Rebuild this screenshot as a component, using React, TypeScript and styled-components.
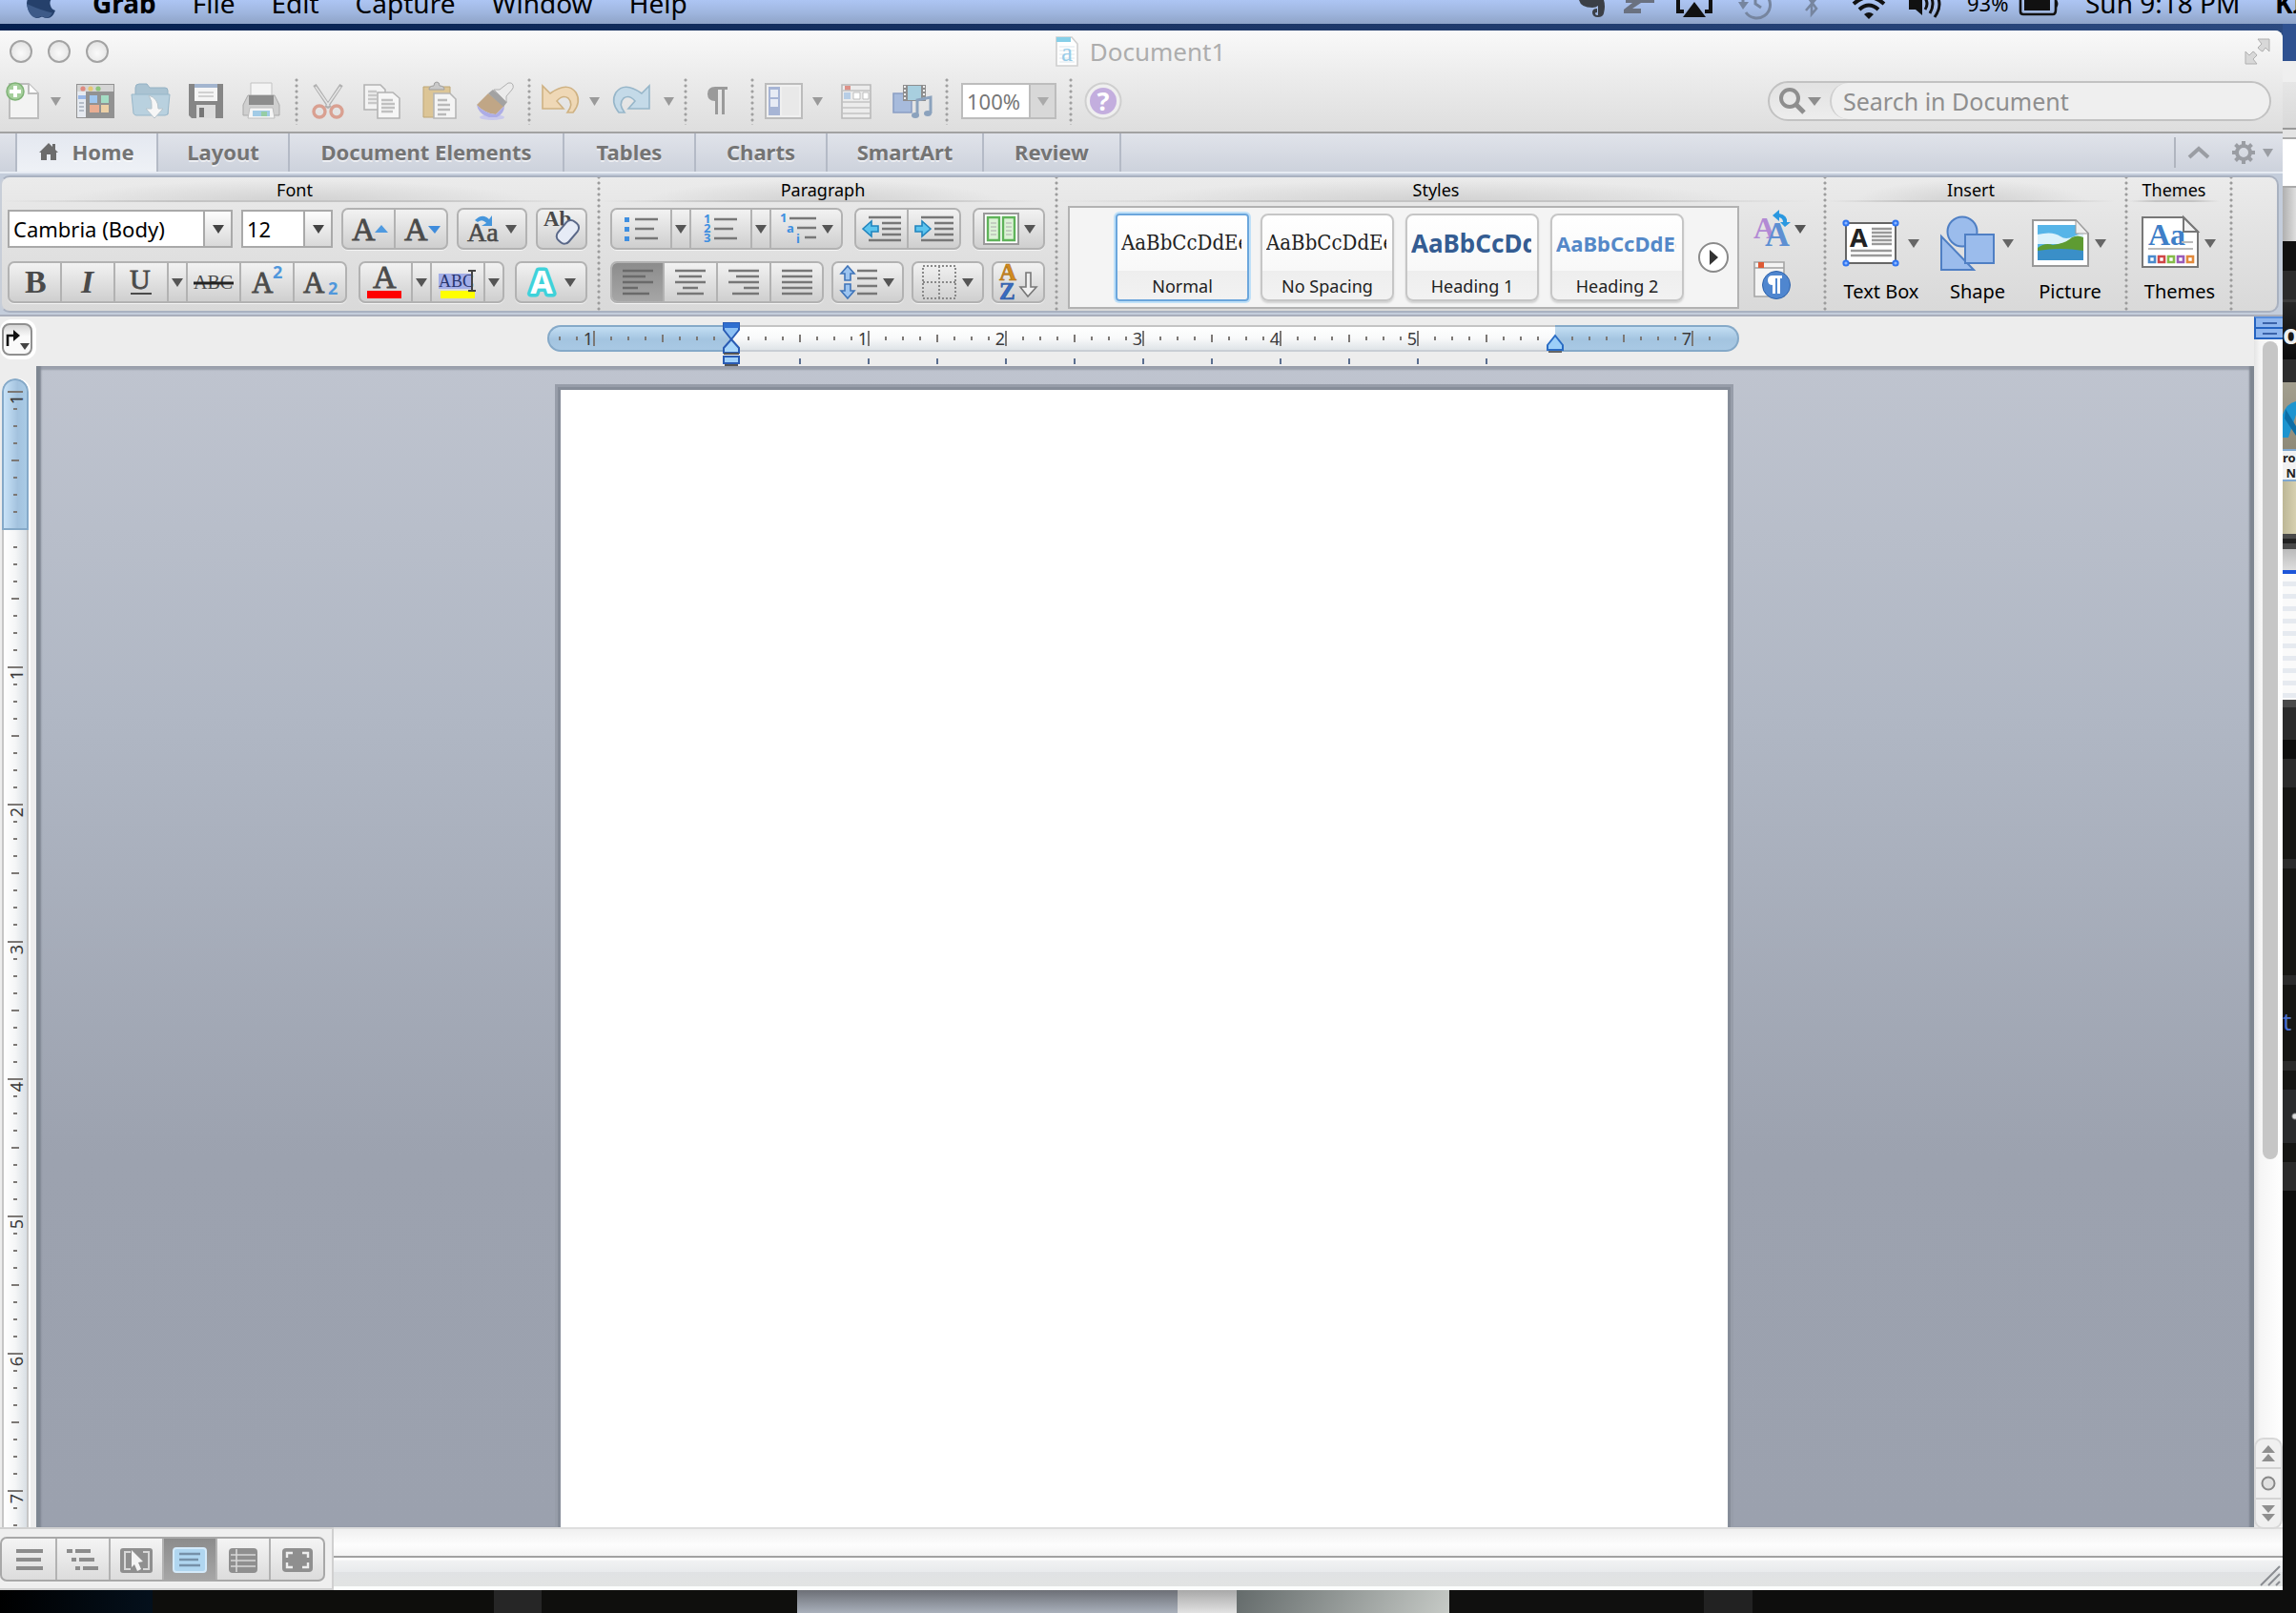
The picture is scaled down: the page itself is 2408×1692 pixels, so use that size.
import React from "react";
import styled, { createGlobalStyle, css } from "styled-components";

const sans = `"Noto Sans", "Open Sans", sans-serif`;
const serif = `"Liberation Serif", serif`;
const bookSerif = `"DejaVu Serif Condensed", "DejaVu Serif", serif`;

const Global = createGlobalStyle`
  * { box-sizing: border-box; }
  html, body { margin: 0; padding: 0; }
  body { font-family: ${sans}; color: #000; background: #0e0e0d; overflow: hidden; }
  button, input, select, textarea { font-family: inherit; margin: 0; }
  button { border: 0; padding: 0; background: none; color: inherit; }
  svg { display: block; flex: none; overflow: visible; }
`;

/* ---------- desktop ---------- */

const Desktop = styled.div`
  height: 100vh;
  display: grid;
  grid-template-columns: minmax(0, 1fr) 14px;
  grid-template-rows: 25px 7px minmax(0, 1fr) 24px;
  background: linear-gradient(90deg, #04204f, #1b3565 50%, #2c4a80) 0 0 / 100% 64px no-repeat #0e0e0d;
`;

const MenuBar = styled.header`
  grid-column: 1 / -1;
  display: flex;
  align-items: flex-end;
  justify-content: space-between;
  overflow: hidden;
  padding-left: 28px;
  background: linear-gradient(#adc5f3, #a0b7e0 50%, #8fa4c8);
`;

const MenuGroup = styled.div`
  display: flex;
  align-items: flex-end;
  gap: 38px;
`;

const MenuItem = styled.button<{ $bold?: boolean }>`
  font-size: 28px;
  line-height: 44px;
  font-weight: ${(p) => (p.$bold ? 700 : 400)};
  white-space: nowrap;
`;

const Status = styled.div`
  display: flex;
  align-items: flex-end;
  white-space: nowrap;
`;

const StatusIcon = styled.button<{ $w: number }>`
  width: ${(p) => p.$w}px;
  height: 25px;
  display: flex;
  justify-content: center;
`;

const StatusText = styled.span<{ $size: number; $w: number; $pad?: number; $bold?: boolean }>`
  width: ${(p) => p.$w}px;
  padding-left: ${(p) => p.$pad ?? 0}px;
  font-size: ${(p) => p.$size}px;
  font-weight: ${(p) => (p.$bold ? 700 : 400)};
  line-height: 44px;
  overflow: hidden;
`;

/* ---------- window ---------- */

const Window = styled.div`
  grid-row: 3;
  min-width: 0;
  display: flex;
  flex-direction: column;
  background: #ededed;
  border-top-right-radius: 8px;
  overflow: hidden;
`;

const Chrome = styled.div`
  background: linear-gradient(#f9f9f9, #ececec 45%, #dedede);
  border-bottom: 2px solid #a2a2a2;
  padding-bottom: 2px;
`;

const TitleBar = styled.div`
  height: 44px;
  padding: 0 12px 0 10px;
  display: grid;
  grid-template-columns: 1fr auto 1fr;
  align-items: center;
`;

const Lights = styled.div`
  display: flex;
  gap: 16px;
`;

const Light = styled.button`
  width: 24px;
  height: 24px;
  border-radius: 50%;
  border: 2px solid #a3a3a3;
  background: radial-gradient(circle at 50% 60%, #fafafa, #dedede);
`;

const Title = styled.h1`
  margin: 0;
  display: flex;
  align-items: center;
  gap: 12px;
  font-size: 26px;
  line-height: 32px;
  font-weight: 400;
  color: #adadad;
`;

const FullScreen = styled.button`
  justify-self: end;
`;

const Toolbar = styled.div`
  height: 60px;
  display: flex;
  align-items: center;
  padding-right: 12px;
`;

const Tool = styled.button<{ $w: number }>`
  width: ${(p) => p.$w}px;
  height: 48px;
  display: flex;
  align-items: center;
  justify-content: center;
  flex: none;
`;

const ToolSep = styled.span`
  width: 16px;
  height: 50px;
  flex: none;
  background: radial-gradient(circle, #a0a0a0 1px, transparent 2px) center top / 4px 6px repeat-y;
`;

const ComboBox = styled.span<{ $w: number; $h: number; $faded?: boolean }>`
  position: relative;
  width: ${(p) => p.$w}px;
  height: ${(p) => p.$h}px;
  flex: none;
  display: block;
  border: 2px solid ${(p) => (p.$faded ? "#bdbdbd" : "#a9a9a9")};
  background: #fff;
  margin: ${(p) => (p.$faded ? "0 7px" : "0")};
  select {
    appearance: none;
    display: block;
    width: 100%;
    height: 100%;
    border: 0;
    padding: 0 0 0 4px;
    background: none;
    font-size: 22px;
    line-height: 32px;
    color: ${(p) => (p.$faded ? "#777" : "#000")};
  }
`;

const ComboArrow = styled.span<{ $w: number; $faded?: boolean }>`
  position: absolute;
  right: 0;
  top: 0;
  bottom: 0;
  width: ${(p) => p.$w}px;
  display: flex;
  align-items: center;
  justify-content: center;
  pointer-events: none;
  border-left: 2px solid ${(p) => (p.$faded ? "#bdbdbd" : "#a9a9a9")};
  background: ${(p) => (p.$faded ? "#d8d8d8" : "linear-gradient(#fdfdfd, #d9d9d9)")};
`;

const Search = styled.label`
  margin-left: auto;
  width: 528px;
  height: 42px;
  display: flex;
  align-items: center;
  border: 2px solid #c2c2c2;
  border-radius: 21px;
  background: linear-gradient(#e2e2e2, #ededed);
  overflow: hidden;
`;

const SearchLens = styled.span`
  width: 63px;
  display: flex;
  align-items: center;
  justify-content: center;
  gap: 2px;
`;

const SearchInput = styled.input`
  flex: 1;
  min-width: 0;
  height: 100%;
  border: 0;
  border-left: 2px solid #cfcfcf;
  border-radius: 19px;
  padding: 0 12px;
  background: #efefef;
  font-size: 25px;
  color: #8e8e8e;
  &::placeholder { color: #8e8e8e; opacity: 1; }
`;

/* ---------- tabs ---------- */

const Tabs = styled.nav`
  height: 40px;
  display: flex;
  padding-left: 16px;
  background: linear-gradient(#e0e3ea, #cdd2dc);
`;

const Tab = styled.button<{ $w: number; $active?: boolean }>`
  width: ${(p) => p.$w}px;
  display: flex;
  align-items: center;
  justify-content: center;
  gap: 14px;
  padding-bottom: 2px;
  font-size: 22px;
  line-height: 30px;
  font-weight: 700;
  color: #747474;
  text-shadow: 0 2px 0 rgba(255, 255, 255, 0.6);
  border-right: 2px solid #b4bac6;
  ${(p) =>
    p.$active &&
    css`
      border-left: 2px solid #b4bac6;
      background: linear-gradient(#e4e8f0, #eef1f6);
    `}
`;

const TabTools = styled.div`
  margin-left: auto;
  display: flex;
  align-items: center;
  padding: 0 10px 0 14px;
  gap: 6px;
`;

const TabRule = styled.span`
  width: 2px;
  height: 32px;
  background: #b0b5bf;
`;

const PlainButton = styled.button<{ $gap?: number; $ml?: number }>`
  display: flex;
  align-items: center;
  gap: ${(p) => p.$gap ?? 0}px;
  margin-left: ${(p) => p.$ml ?? 0}px;
`;

/* ---------- ribbon ---------- */

const RibbonFrame = styled.div`
  padding: 2px 4px 2px 0;
  border-top: 2px solid #e6ebf3;
  border-bottom: 2px solid #a9aebb;
  background: #c4cddb;
`;

const Ribbon = styled.div`
  height: 144px;
  display: flex;
  border: 2px solid #a9b1c0;
  border-left-color: #c8ced8;
  border-radius: 10px;
  background: linear-gradient(#ebebeb, #e3e3e3 40%, #d9d9d9);
`;

const Group = styled.section<{ $w?: number }>`
  ${(p) => (p.$w ? `width: ${p.$w}px; flex: none;` : "flex: 1; min-width: 0;")}
  display: flex;
  flex-direction: column;
  padding-right: 14px;
  background: radial-gradient(circle, #9c9c9c 1px, transparent 2px) right 9px / 4px 6px repeat-y;
`;

const GroupTitle = styled.h2`
  margin: 0 0 6px;
  height: 26px;
  font-size: 18px;
  line-height: 26px;
  font-weight: 400;
  text-align: center;
  background:
    linear-gradient(90deg, transparent, #c4c4c4 30%, #c4c4c4 70%, transparent) bottom / 100% 2px no-repeat,
    radial-gradient(ellipse 40% 90% at 50% 100%, #d0d0d0, transparent);
`;

const Rows = styled.div<{ $pad: number }>`
  display: flex;
  flex-direction: column;
  gap: 12px;
  padding-left: ${(p) => p.$pad}px;
`;

const Row = styled.div`
  display: flex;
  align-items: center;
  justify-content: space-between;
  height: 44px;
`;

const Segments = styled.div`
  display: flex;
  height: 44px;
  border: 2px solid #b2b2b2;
  border-radius: 7px;
  background: linear-gradient(#f2f2f2, #cfcfcf);
  box-shadow: 0 1px 0 #f4f4f4;
  overflow: hidden;
`;

const Segment = styled.button<{ $w: number; $on?: boolean; $gap?: number }>`
  width: ${(p) => p.$w}px;
  height: 100%;
  display: flex;
  align-items: center;
  justify-content: center;
  gap: ${(p) => p.$gap ?? 0}px;
  & + & { border-left: 2px solid #b2b2b2; }
  ${(p) => p.$on && "background: linear-gradient(#8c8c8c, #a6a6a6);"}
`;

const StylesBody = styled.div`
  display: flex;
  padding-left: 10px;
  gap: 15px;
`;

const Gallery = styled.div`
  width: 704px;
  height: 108px;
  flex: none;
  margin-top: -2px;
  padding: 6px 6px 6px 48px;
  display: flex;
  gap: 12px;
  align-items: center;
  border: 2px solid #b2b2b2;
  background: #f4f4f4;
`;

const Card = styled.button<{ $on?: boolean }>`
  width: 140px;
  height: 92px;
  flex: none;
  display: flex;
  flex-direction: column;
  border: 2px solid ${(p) => (p.$on ? "#6ba6dc" : "#c6c6c6")};
  border-radius: ${(p) => (p.$on ? 4 : 8)}px;
  box-shadow: ${(p) => (p.$on ? "0 0 0 2px #bfe0f8" : "0 2px 2px #d2d2d2")};
  background: linear-gradient(#fff, #f8f8f8 66%, #eee 66%, #f2f2f2);
  overflow: hidden;
`;

const Preview = styled.span<{ $size: number; $color: string; $family: string; $bold?: boolean }>`
  height: 60px;
  width: 126px;
  margin: 0 4px;
  line-height: 58px;
  text-align: left;
  white-space: nowrap;
  overflow: hidden;
  font-family: ${(p) => p.$family};
  font-size: ${(p) => p.$size}px;
  font-weight: ${(p) => (p.$bold ? 700 : 400)};
  color: ${(p) => p.$color};
`;

const CardName = styled.span`
  width: 100%;
  font-size: 18px;
  line-height: 28px;
  text-align: center;
  color: #222;
`;

const RoundNext = styled.button`
  width: 32px;
  height: 32px;
  flex: none;
  margin: 0 auto;
  border: 2px solid #8a8a8a;
  border-radius: 50%;
  background: #fff;
  display: flex;
  align-items: center;
  justify-content: center;
`;

const StyleTools = styled.div`
  display: flex;
  flex-direction: column;
  gap: 14px;
  padding-top: 2px;
`;

const BigRow = styled.div<{ $pad: number }>`
  display: flex;
  padding-left: ${(p) => p.$pad}px;
`;

const BigButton = styled.button<{ $w: number }>`
  width: ${(p) => p.$w}px;
  display: flex;
  flex-direction: column;
  align-items: center;
  font-size: 20px;
  line-height: 28px;
  white-space: nowrap;
`;

const BigIcon = styled.span`
  height: 74px;
  width: 80px;
  display: flex;
  align-items: center;
  gap: 6px;
`;

const RibbonTail = styled.div`
  width: 46px;
  flex: none;
`;

/* ---------- document ---------- */

const Body = styled.div`
  flex: 1;
  min-height: 0;
  display: grid;
  grid-template-columns: 38px minmax(0, 1fr) 30px;
  grid-template-rows: 52px minmax(0, 1fr);
`;

const TabStop = styled.button`
  width: 38px;
  height: 42px;
  margin-top: 3px;
  border: 4px solid #fff;
  border-left-width: 2px;
  border-radius: 12px;
  background: #fff;
  span {
    display: flex;
    width: 100%;
    height: 100%;
    align-items: center;
    justify-content: center;
    border: 2px solid #909090;
    border-radius: 8px;
    background: linear-gradient(#d6d6d6, #fafafa 40%);
  }
`;

const RulerArea = styled.div`
  display: flex;
  flex-direction: column;
  align-items: center;
  padding: 9px 4px 0 0;
`;

const HRuler = styled.div`
  display: flex;
  height: 28px;
`;

const HPart = styled.div<{ $margin?: "left" | "right" }>`
  display: flex;
  flex: none;
  position: relative;
  padding: 0 9px;
  border-top: 2px solid #c4c4c4;
  border-bottom: 2px solid #c9ced4;
  background: linear-gradient(#fff, #f8f9fa 50%, #dfe4e8);
  ${(p) =>
    p.$margin &&
    css`
      width: 193px;
      padding-${p.$margin}: 0;
      justify-content: ${p.$margin === "left" ? "flex-end" : "flex-start"};
      border: 2px solid #85a9c8;
      border-${p.$margin === "left" ? "right" : "left"}: 0;
      border-radius: ${p.$margin === "left" ? "14px 0 0 14px" : "0 14px 14px 0"};
      background: linear-gradient(#c3def3, #a3c4e0 55%, #a9c9e4);
    `}
`;

const HTick = styled.span<{ $h: number }>`
  position: relative;
  width: 18px;
  flex: none;
  display: flex;
  align-items: center;
  justify-content: center;
  &::before {
    content: "";
    width: 2px;
    height: ${(p) => p.$h}px;
    background: #7c7875;
  }
`;

const HLabel = styled.span`
  position: absolute;
  right: 10px;
  top: 0;
  font-size: 18px;
  line-height: 24px;
  color: #3a3a3a;
`;

const Marker = styled.span<{ $side: "left" | "right" }>`
  position: absolute;
  ${(p) => p.$side}: -9px;
  top: -5px;
  z-index: 1;
`;

const TabTicks = styled.div`
  display: flex;
  margin-top: 7px;
`;

const TabTick = styled.span`
  width: 72px;
  height: 6px;
  background: linear-gradient(#5c6f8f, #5c6f8f) center / 2px 6px no-repeat;
`;

const VRuler = styled.div`
  margin: 13px 0 0 2px;
  width: 28px;
  overflow: hidden;
  display: flex;
  flex-direction: column;
  box-shadow: 2px 0 0 #fff;
  border-radius: 14px 14px 0 0;
`;

const VPart = styled.div<{ $margin?: boolean }>`
  flex: none;
  display: flex;
  flex-direction: column;
  padding: 9px 0;
  border: 0 solid #c6c6c6;
  border-width: 0 2px;
  background: linear-gradient(90deg, #fff, #f5f6f7 50%, #d9dfe4);
  ${(p) =>
    p.$margin &&
    css`
      padding-top: 3px;
      height: 159px;
      border: 2px solid #85a9c8;
      border-radius: 14px 14px 0 0;
      background: linear-gradient(90deg, #c9e3f8, #a3c2de 60%, #a9cbe6);
    `}
`;

const VTick = styled.span<{ $w: number }>`
  position: relative;
  height: 18px;
  flex: none;
  display: flex;
  align-items: center;
  justify-content: center;
  &::before {
    content: "";
    height: 2px;
    width: ${(p) => p.$w}px;
    background: #7c7875;
  }
`;

const VLabel = styled.span`
  position: absolute;
  top: 12px;
  left: 1px;
  width: 100%;
  font-size: 18px;
  line-height: 24px;
  writing-mode: vertical-rl;
  transform: rotate(180deg);
  color: #3a3a3a;
`;

const Canvas = styled.main`
  overflow: hidden;
  display: flex;
  justify-content: center;
  padding: 25px 3px 0 0;
  background: linear-gradient(#bfc4cf, #b0b7c4 30%, #9ca2af 68%, #9ba1ae);
  box-shadow: inset 6px 0 2px -1px #7e8691, inset -6px 0 2px -1px #7e8691, inset 0 5px 2px -1px #9aa0ac;
`;

const Page = styled.textarea`
  width: 1224px;
  border: 0;
  outline: 0;
  resize: none;
  padding: 143px 178px;
  background: #fff;
  font-size: 24px;
  box-shadow: 0 0 0 3px #868d99, 0 0 0 6px #979da9;
`;

const Scroll = styled.div`
  grid-column: 3;
  grid-row: 1 / 3;
  display: flex;
  flex-direction: column;
  align-items: center;
  background: linear-gradient(90deg, #e4e4e4, #f5f5f5 20%, #fff);
`;

const SplitHandle = styled.button`
  width: 30px;
  height: 24px;
  flex: none;
  display: flex;
  flex-direction: column;
  border: 2px solid #2563c0;
  border-top-color: #5a8fdc;
  border-right: 0;
  background: #8fb6ee;
  &::before, &::after {
    content: "";
    flex: 1;
    width: 100%;
    background: linear-gradient(#3a62a8, #3a62a8) center / 15px 2px no-repeat;
  }
  &::before { border-bottom: 2px solid #2563c0; }
`;

const Thumb = styled.div`
  width: 16px;
  height: calc(68% - 6px);
  margin: 2px 0 0 3px;
  border-radius: 8px;
  background: #c6c6c6;
`;

const Browse = styled.div`
  margin: auto 0 -2px;
  width: 100%;
  height: 96px;
  display: flex;
  flex-direction: column;
  border: 2px solid #d8d8d8;
  border-radius: 10px;
  background: #f0f0f0;
  z-index: 1;
  button {
    flex: 1;
    display: flex;
    align-items: center;
    justify-content: center;
  }
  button + button { border-top: 2px solid #d4d4d4; }
`;

const Footer = styled.footer`
  height: 66px;
  display: flex;
`;

const Views = styled.div`
  width: 350px;
  padding: 8px 6px 8px 0;
  border: 2px solid #d0d0d0;
  border-left: 0;
  background: #efefef;
  display: flex;
`;

const ViewSegments = styled(Segments)`
  height: 47px;
  border-color: #a8a8a8;
  background: linear-gradient(#f4f4f4, #dcdcdc);
`;

const Bars = styled.div`
  flex: 1;
  display: flex;
  flex-direction: column;
`;

const HScroll = styled.div`
  height: 30px;
  border-top: 2px solid #dedede;
  background: linear-gradient(#f0f0f0, #fdfdfd 60%, #f4f4f4);
`;

const StatusBar = styled.div`
  flex: 1;
  display: flex;
  justify-content: flex-end;
  align-items: flex-end;
  padding: 0 2px 0 0;
  border-top: 2px solid #a2a2a2;
  border-bottom: 4px solid #fbfdfc;
  background: linear-gradient(#fff 2px, #f1f2f3 3px, #e8eaec 50%, #e0e2e4 51%, #e2e4e3);
`;

/* ---------- windows behind ---------- */

const Behind = styled.div`
  grid-row: 2 / 4;
  grid-column: 2;
  overflow: hidden;
  display: flex;
  flex-direction: column;
`;

const Slab = styled.div<{ $h: number; $bg: string }>`
  height: ${(p) => p.$h}px;
  flex: none;
  overflow: hidden;
  background: ${(p) => p.$bg};
`;

const SlabText = styled.span<{ $size: number; $line: number; $color: string; $bold?: boolean }>`
  display: block;
  white-space: nowrap;
  font-size: ${(p) => p.$size}px;
  line-height: ${(p) => p.$line}px;
  color: ${(p) => p.$color};
  font-weight: ${(p) => (p.$bold ? 700 : 400)};
`;

const Below = styled.div`
  grid-row: 4;
  grid-column: 1 / -1;
  display: flex;
`;

const Chunk = styled.div<{ $grow: number; $bg: string }>`
  flex: ${(p) => p.$grow} 1 0;
  background: ${(p) => p.$bg};
`;

/* ---------- drawings ---------- */

const Down = ({ c = "#555", w = 12 }: { c?: string; w?: number }) => (
  <svg width={w} height="9" viewBox="0 0 12 9" preserveAspectRatio="none">
    <path d="M0 0h12L6 9z" fill={c} />
  </svg>
);

const Lines = ({ rows, y = 0, step = 6, c = "#777" }: { rows: [number, number][]; y?: number; step?: number; c?: string }) => (
  <g stroke={c} strokeWidth="2.4">
    {rows.map(([a, b], i) => (
      <path key={i} d={`M${a} ${y + i * step}H${b}`} />
    ))}
  </g>
);

const icons: Record<string, React.ReactNode> = {
  new: (
    <>
      <path d="M7 2h20l10 10v26H7z" fill="#f3f3f3" stroke="#bdbdbd" strokeWidth="2" />
      <path d="M27 2v10h10" fill="#fff" stroke="#bdbdbd" strokeWidth="2" />
      <circle cx="13" cy="10" r="9" fill="#a5cf9c" stroke="#7fb276" strokeWidth="1.5" />
      <path d="M13 4v12M7 10h12" stroke="#fff" strokeWidth="4" />
    </>
  ),
  gallery: (
    <>
      <path d="M0 2h40v36H0z" fill="#929292" />
      <path d="M1 3h38v7H1z" fill="#d5d5d5" />
      <path d="M1 10h9v27H1z" fill="#e6eaf0" />
      <path d="M2 14h8v4H2z" fill="#9bb8e6" />
      <path d="M3 22h5M3 26h5M3 30h5" stroke="#b5bdc8" strokeWidth="2" />
      <circle cx="7" cy="7" r="2.6" fill="#df8a80" />
      <circle cx="15" cy="7" r="2.6" fill="#e5c775" />
      <circle cx="23" cy="7" r="2.6" fill="#8cc47c" />
      <path d="M14 14h8v8h-8z" fill="#a0c6ee" />
      <path d="M26 14h8v8h-8z" fill="#a4dcc4" />
      <path d="M14 24h10v8H14z" fill="#e9ae93" />
      <path d="M26 24h8v8h-8z" fill="#ecd0a6" />
    </>
  ),
  open: (
    <>
      <path d="M4 6q0-4 4-4h8l3 4h16q3 0 3 3v25H4z" fill="#aac3d2" stroke="#94b2c4" />
      <path d="M0 13h40l-2 20q-1 2-3 2H5q-2 0-3-2z" fill="#b9d1df" stroke="#98b7c9" />
      <path d="M18 14q10 3 10 14h5l-9 10-9-10h6q1-8-3-14z" fill="#f6f6f6" stroke="#b6c4cc" />
    </>
  ),
  save: (
    <>
      <path d="M2 2h36v36H5l-3-3z" fill="#868686" />
      <path d="M8 2h24v18H8z" fill="#f5f5f5" />
      <path d="M8 2h24v4H8z" fill="#a3b5cf" />
      <path d="M12 11h16M12 15h16" stroke="#c5c5c5" strokeWidth="1.6" />
      <path d="M10 24h20v14H10z" fill="#dcdcdc" />
      <path d="M13 27h5v10h-5z" fill="#777" />
    </>
  ),
  print: (
    <>
      <path d="M9 1h22v16H9z" fill="#f4f4f4" stroke="#c2c2c2" />
      <path d="M6 14h28l5 10v11H1V24z" fill="#cfcfcf" stroke="#a9a9a9" />
      <path d="M7 14h26v10H7z" fill="#8d8d8d" />
      <path d="M8 27h24l2 11H6z" fill="#f5f5f5" stroke="#bdbdbd" />
      <path d="M11 30h18v6H11z" fill="#a2cbe6" />
      <path d="M20 31h6v5h-6z" fill="#97cda5" />
    </>
  ),
  cut: (
    <>
      <path d="M6 3l16 24M34 3L18 27" stroke="#b0b0b0" strokeWidth="4" />
      <path d="M7 5l14 20M33 5L19 25" stroke="#e4e4e4" strokeWidth="1.6" />
      <circle cx="11" cy="31" r="6" fill="none" stroke="#d9a091" strokeWidth="3.4" />
      <circle cx="29" cy="31" r="6" fill="none" stroke="#d9a091" strokeWidth="3.4" />
    </>
  ),
  copy: (
    <>
      <path d="M2 3h17l5 5v21H2z" fill="#f3f3f3" stroke="#b3b3b3" strokeWidth="1.6" />
      <Lines rows={[[6, 15], [6, 15], [6, 15], [6, 15]]} y={10} step={4} c="#c8c8c8" />
      <path d="M16 11h16l7 6v21H16z" fill="#f6f6f6" stroke="#b3b3b3" strokeWidth="1.6" />
      <Lines rows={[[20, 32], [20, 34], [20, 34], [20, 32]]} y={19} step={4} c="#c0c0c0" />
    </>
  ),
  paste: (
    <>
      <path d="M4 5h28v32H4z" fill="#dcc596" stroke="#bda677" />
      <path d="M10 8q0-4 5-4 0-4 3-4t3 4q5 0 5 4z" fill="#c9c9c9" stroke="#9f9f9f" />
      <path d="M15 12h17l6 6v20H15z" fill="#f4f4f4" stroke="#b5b5b5" strokeWidth="1.6" />
      <Lines rows={[[19, 29], [19, 32], [19, 32], [19, 28]]} y={19} step={5} c="#b9b9b9" />
    </>
  ),
  brush: (
    <>
      <ellipse cx="18" cy="37" rx="13" ry="3" fill="#c9c9ec" />
      <path d="M2 24l12-12 17 13-9 9q-12-1-20-10z" fill="#c0a686" />
      <path d="M2 24q8 9 20 10l9-9q0 8-8 12h-8Q4 34 2 24z" fill="#adade6" />
      <path d="M14 12l5-4 15 13-4 5z" fill="#a2a2a2" />
      <path d="M20 8l6 0 9-7q4-1 5 2 1 3-1 5l-6 7 0 6z" fill="#ebebeb" stroke="#b0b0b0" />
    </>
  ),
  undo: (
    <path d="M1 4v24h22l-7-8q6-7 12-3 6 6-1 15h6q9-11 3-21Q27-1 9 12z" fill="#efd8b6" stroke="#cfb283" strokeWidth="1.6" />
  ),
  redo: (
    <path d="M39 4v24H17l7-8q-6-7-12-3-6 6 1 15H7Q-2 21 4 11q9-12 27 1z" fill="#c4dae8" stroke="#97b6c9" strokeWidth="1.6" />
  ),
  pilcrow: (
    <path d="M29 5v3h-3v26h-3V8h-4v26h-3V20q-8 0-8-7.500 0-7.500 8-7.500z" fill="#9a9a9a" />
  ),
  sidebar: (
    <>
      <path d="M1 2h38v36H1z" fill="#f0f0f0" stroke="#bcbcbc" strokeWidth="2" />
      <path d="M4 5h12v30H4z" fill="#a7b5d5" />
      <path d="M6 8h8v8H6zM6 18h8v8H6z" fill="#e7ebf4" />
      <path d="M18 5h18v30H18z" fill="#e9e9e9" />
    </>
  ),
  toolbox: (
    <>
      <path d="M5 3h30v35H5z" fill="#ececec" stroke="#b9b9b9" strokeWidth="1.6" />
      <path d="M8 4h6v5H8z" fill="#dd9188" />
      <path d="M7 11h7v7H7z" fill="#b7cee6" />
      <path d="M17 11h7v7h-7zM27 11h6v7h-6z" fill="#fff" stroke="#bdbdbd" />
      <path d="M5 21h30M5 27h30M5 33h30M5 9h30" stroke="#c2c2c2" strokeWidth="1.6" />
    </>
  ),
  media: (
    <>
      <path d="M0 12h19v20H0z" fill="#a7bbdc" stroke="#8b9fc4" strokeWidth="1.6" />
      <path d="M10 3h24v17H10z" fill="#8e8e8e" />
      <path d="M15 4h14v15H15z" fill="#a8cfdf" />
      <path d="M12 4v15M32 4v15" stroke="#eee" strokeWidth="2" strokeDasharray="2 2" />
      <path d="M25 35V19l14-3v17" fill="none" stroke="#8ba2bd" strokeWidth="3" />
      <ellipse cx="23" cy="35" rx="4" ry="3" fill="#8ba2bd" />
      <ellipse cx="36" cy="33" rx="4" ry="3" fill="#8ba2bd" />
    </>
  ),
  help: (
    <>
      <circle cx="20" cy="20" r="18.500" fill="#efefef" stroke="#cfcfcf" strokeWidth="2" />
      <circle cx="20" cy="20" r="14" fill="#c3aede" />
      <text x="20" y="30" textAnchor="middle" fontSize="27" fontWeight="700" fill="#fff" fontFamily="Noto Sans">?</text>
    </>
  ),
};

const Icon = ({ name, size = 40 }: { name: string; size?: number }) => (
  <svg width={size} height={size} viewBox="0 0 40 40">
    {icons[name]}
  </svg>
);

const Glyph = ({ children, w = 40 }: { children: React.ReactNode; w?: number }) => (
  <svg width={w} height="40" viewBox={`0 0 ${w} 40`} fontFamily={serif} fontSize="34" fill="#4a4a4a">
    {children}
  </svg>
);

const BigA = ({ x, y = 32, size = 34 }: { x: number; y?: number; size?: number }) => (
  <text x={x} y={y} fontSize={size} stroke="#4a4a4a" strokeWidth="0.8">A</text>
);

const AppleLogo = () => (
  <svg width="31" height="20" viewBox="0 0 31 20">
    <path d="M5-6h20q2 1 3 3-5 4-3 9 1 4 5 5-3 8-8 8-3 0-6-1.500-3 1.500-6 1.500Q2 17 0 4q0-6 5-10z" fill="#25406b" />
    <path d="M0 4q1 9 6 13 2 2 5 1.500 3-1.500 5-1.500 3 1.500 6 1.500 3-1 5-5Q18 12 0 4z" fill="#3d5a88" />
  </svg>
);

/* ---------- data ---------- */

type ToolItem = { kind: "tool" | "arrow" | "sep"; name?: string; label?: string; w?: number };
const tools: ToolItem[] = [
  { kind: "tool", name: "new", label: "New", w: 46 },
  { kind: "arrow", label: "New options", w: 25 },
  { kind: "tool", name: "gallery", label: "Gallery", w: 58 },
  { kind: "tool", name: "open", label: "Open", w: 58 },
  { kind: "tool", name: "save", label: "Save", w: 58 },
  { kind: "tool", name: "print", label: "Print", w: 58 },
  { kind: "sep" },
  { kind: "tool", name: "cut", label: "Cut", w: 50 },
  { kind: "tool", name: "copy", label: "Copy", w: 62 },
  { kind: "tool", name: "paste", label: "Paste", w: 58 },
  { kind: "tool", name: "brush", label: "Format painter", w: 58 },
  { kind: "sep" },
  { kind: "tool", name: "undo", label: "Undo", w: 50 },
  { kind: "arrow", label: "Undo history", w: 20 },
  { kind: "tool", name: "redo", label: "Redo", w: 58 },
  { kind: "arrow", label: "Redo history", w: 20 },
  { kind: "sep" },
  { kind: "tool", name: "pilcrow", label: "Show marks", w: 54 },
  { kind: "sep" },
  { kind: "tool", name: "sidebar", label: "Sidebar", w: 50 },
  { kind: "arrow", label: "Sidebar options", w: 20 },
  { kind: "tool", name: "toolbox", label: "Toolbox", w: 62 },
  { kind: "tool", name: "media", label: "Media", w: 56 },
  { kind: "sep" },
];

const tabs: [string, number][] = [
  ["Home", 150], ["Layout", 138], ["Document Elements", 288], ["Tables", 138],
  ["Charts", 138], ["SmartArt", 164], ["Review", 144],
];

const cards = [
  { name: "Normal", size: 22, color: "#222", family: bookSerif },
  { name: "No Spacing", size: 22, color: "#222", family: bookSerif },
  { name: "Heading 1", size: 26, color: "#345c92", family: sans, bold: true },
  { name: "Heading 2", size: 22, color: "#5488c8", family: sans, bold: true },
];

const range = (n: number, from = 1) => Array.from({ length: n }, (_, i) => i + from);
const tickSize = (k: number) => (k % 8 === 0 ? 16 : k % 4 === 0 ? 8 : 4);

const aligns: { label: string; rows: [number, number][] }[] = [
  { label: "Align left", rows: [[4, 36], [4, 28], [4, 36], [4, 20], [4, 32]] },
  { label: "Center", rows: [[4, 36], [8, 32], [4, 36], [12, 28], [6, 34]] },
  { label: "Align right", rows: [[4, 36], [12, 36], [4, 36], [20, 36], [8, 36]] },
  { label: "Justify", rows: [[4, 36], [4, 36], [4, 36], [4, 36], [4, 36]] },
];

/* ---------- sections ---------- */

function Combo({ label, value, w, h = 40, arrow, faded }: { label: string; value: string; w: number; h?: number; arrow: number; faded?: boolean }) {
  return (
    <ComboBox $w={w} $h={h} $faded={faded}>
      <select aria-label={label} defaultValue={value}>
        <option>{value}</option>
      </select>
      <ComboArrow $w={arrow} $faded={faded}>
        <Down c={faded ? "#aaa" : "#444"} />
      </ComboArrow>
    </ComboBox>
  );
}

function Menus() {
  return (
    <MenuBar>
      <MenuGroup>
        <StatusIcon $w={31} aria-label="Apple menu"><AppleLogo /></StatusIcon>
        <MenuItem $bold>Grab</MenuItem>
        {["File", "Edit", "Capture", "Window", "Help"].map((m) => (
          <MenuItem key={m}>{m}</MenuItem>
        ))}
      </MenuGroup>
      <Status>
        <StatusIcon $w={74} aria-label="Evernote">
          <svg width="28" height="20" viewBox="0 0 28 20">
            <path d="M0 0h26q2 6 0 14-1 4-6 4-6 0-6-5 0-4 5-4v4q-2 0-2 1 0 2 3 2V6q-2 2-6 2Q2 8 0 0z" fill="#3b3f46" />
          </svg>
        </StatusIcon>
        <StatusIcon $w={24} aria-label="Sync">
          <svg width="32" height="20" viewBox="0 0 32 20">
            <path d="M2 0h16v3L9 9h9v5H0V10l9-7H2zM14 0h18v3H14z" fill="#6a7180" />
          </svg>
        </StatusIcon>
        <StatusIcon $w={92} aria-label="AirPlay">
          <svg width="38" height="20" viewBox="0 0 38 20">
            <path d="M2 0v12h6M36 0v12h-6" fill="none" stroke="#111" strokeWidth="4" />
            <path d="M19 2l12 16H7z" fill="#111" />
          </svg>
        </StatusIcon>
        <StatusIcon $w={34} aria-label="Time Machine">
          <svg width="34" height="20" viewBox="0 0 34 20">
            <path d="M31-3A14 14 0 0 1 8 13M5-4v8M18-2v6l6 4" fill="none" stroke="#76859f" strokeWidth="3" />
            <path d="M0 2h11L5 10z" fill="#76859f" />
          </svg>
        </StatusIcon>
        <StatusIcon $w={86} aria-label="Bluetooth">
          <svg width="16" height="20" viewBox="0 0 16 20">
            <path d="M2-6l11 15-5 6V-8M2 11L14-3" fill="none" stroke="#76859f" strokeWidth="2.600" />
          </svg>
        </StatusIcon>
        <StatusIcon $w={34} aria-label="Wi-Fi">
          <svg width="36" height="20" viewBox="0 0 36 20">
            <path d="M2 4Q18-10 34 4M8 10q10-9 20 0" fill="none" stroke="#111" strokeWidth="4" />
            <path d="M13 15q5-4 10 0l-5 5z" fill="#111" />
          </svg>
        </StatusIcon>
        <StatusIcon $w={86} aria-label="Volume">
          <svg width="36" height="20" viewBox="0 0 36 20">
            <path d="M0 0h7l7-8v24L7 10H0z" fill="#111" />
            <path d="M17 10q4-6 0-12M22 14q6-10 0-20M27 18q10-14 0-26" fill="none" stroke="#111" strokeWidth="3" />
          </svg>
        </StatusIcon>
        <StatusText $size={22} $w={51}>93%</StatusText>
        <StatusIcon $w={48} aria-label="Battery">
          <svg width="43" height="20" viewBox="0 0 43 20">
            <path d="M2-6v18q0 3 3 3h31q3 0 3-5V-6" fill="none" stroke="#111" strokeWidth="2.600" />
            <path d="M6-6h27v17H6zM40 0q3 4 0 8z" fill="#111" />
          </svg>
        </StatusIcon>
        <StatusText $size={28} $w={224} $pad={25}>Sun 9:18 PM</StatusText>
        <StatusText $size={28} $w={22} $bold>KI</StatusText>
      </Status>
    </MenuBar>
  );
}

function Top() {
  return (
    <Chrome>
      <TitleBar>
        <Lights>
          <Light aria-label="Close" />
          <Light aria-label="Minimize" />
          <Light aria-label="Zoom" />
        </Lights>
        <Title>
          <svg width="24" height="32" viewBox="0 0 24 32">
            <path d="M1 1h16l6 7v23H1z" fill="#fff" stroke="#cfcfcf" strokeWidth="1.600" />
            <path d="M1 1h15v5H1z" fill="#86cfe8" />
            <path d="M4 11h16M4 15h16M4 19h16M4 23h16M4 27h16" stroke="#dde6ec" />
            <text x="12" y="26" textAnchor="middle" fontSize="27" fontFamily={serif} fill="#98cce8">a</text>
          </svg>
          Document1
        </Title>
        <FullScreen aria-label="Full screen">
          <svg width="28" height="28" viewBox="0 0 28 28">
            <path d="M14 1h12v13l-4-4-3 4q-3-1-5-4l4-4z" fill="#d8d8d8" stroke="#b0b0b0" />
            <path d="M1 14v13h12l-4-5 4-4q-2-3-4-4l-4 4z" fill="#d8d8d8" stroke="#b0b0b0" />
          </svg>
        </FullScreen>
      </TitleBar>
      <Toolbar>
        {tools.map((t, i) =>
          t.kind === "sep" ? (
            <ToolSep key={i} />
          ) : (
            <Tool key={i} $w={t.w!} aria-label={t.label}>
              {t.kind === "arrow" ? <Down c="#9a9a9a" w={11} /> : <Icon name={t.name!} />}
            </Tool>
          ),
        )}
        <Combo label="Zoom" value="100%" w={100} h={38} arrow={27} faded />
        <ToolSep />
        <Tool $w={52} aria-label="Help"><Icon name="help" /></Tool>
        <Search>
          <SearchLens>
            <svg width="28" height="28" viewBox="0 0 28 28">
              <circle cx="11" cy="11" r="9" fill="none" stroke="#8e8e8e" strokeWidth="4" />
              <path d="M17 17l9 9" stroke="#8e8e8e" strokeWidth="5" />
            </svg>
            <Down c="#8e8e8e" w={14} />
          </SearchLens>
          <SearchInput aria-label="Search in Document" placeholder="Search in Document" />
        </Search>
      </Toolbar>
    </Chrome>
  );
}

function TabStrip() {
  return (
    <Tabs>
      {tabs.map(([t, w], i) => (
        <Tab key={t} $w={w} $active={i === 0}>
          {i === 0 && (
            <svg width="20" height="18" viewBox="0 0 20 18">
              <path d="M10 0l4 4V1h3v6l3 3h-2v8h-6v-6H8v6H2v-8H0z" fill="#6c6c6c" />
            </svg>
          )}
          {t}
        </Tab>
      ))}
      <TabTools>
        <TabRule />
        <PlainButton aria-label="Collapse ribbon" $ml={6}>
          <svg width="24" height="14" viewBox="0 0 24 14">
            <path d="M2 12L12 3l10 9" fill="none" stroke="#9a9da3" strokeWidth="4" />
          </svg>
        </PlainButton>
        <PlainButton aria-label="Ribbon settings" $gap={7} $ml={16}>
          <svg width="26" height="26" viewBox="0 0 26 26">
            <circle cx="13" cy="13" r="7" fill="none" stroke="#9a9da3" strokeWidth="4" />
            <g stroke="#9a9da3" strokeWidth="4">
              {[0, 45, 90, 135].map((a) => (
                <path key={a} d="M13 1v4M13 21v4" transform={`rotate(${a} 13 13)`} />
              ))}
            </g>
          </svg>
          <Down c="#9a9da3" w={11} />
        </PlainButton>
      </TabTools>
    </Tabs>
  );
}

function FontGroup() {
  return (
    <Group $w={628}>
      <GroupTitle>Font</GroupTitle>
      <Rows $pad={6}>
        <Row>
          <Combo label="Font name" value="Cambria (Body)" w={236} arrow={29} />
          <Combo label="Font size" value="12" w={96} arrow={29} />
          <Segments>
            <Segment $w={53} aria-label="Grow font">
              <Glyph><BigA x={2} /><path d="M26 24l7-8 7 8z" fill="#4f9ae0" /></Glyph>
            </Segment>
            <Segment $w={55} aria-label="Shrink font">
              <Glyph><BigA x={2} /><path d="M27 17h13l-6 8z" fill="#3f8cdc" /></Glyph>
            </Segment>
          </Segments>
          <Segments>
            <Segment $w={70} $gap={6} aria-label="Change case">
              <Glyph w={34}>
                <text x="0" y="33" fontSize="28" stroke="#4a4a4a" strokeWidth="0.6">Aa</text>
                <path d="M8 11q8-8 15-1l3-4v11H15l5-3q-4-5-9-1z" fill="#4696dc" />
              </Glyph>
              <Down />
            </Segment>
          </Segments>
          <Segments>
            <Segment $w={50} aria-label="Clear formatting">
              <Glyph>
                <text x="1" y="17" fontSize="23" fontWeight="700">Ab</text>
                <rect x="13" y="16" width="26" height="15" rx="6" transform="rotate(-50 26 23)" fill="#e6ebf6" stroke="#5a6888" strokeWidth="2" />
              </Glyph>
            </Segment>
          </Segments>
        </Row>
        <Row>
          <Segments>
            <Segment $w={53} aria-label="Bold"><Glyph><text x="9" y="31" fontWeight="700">B</text></Glyph></Segment>
            <Segment $w={56} aria-label="Italic"><Glyph><text x="13" y="31" fontStyle="italic" fontWeight="700">I</text></Glyph></Segment>
            <Segment $w={56} aria-label="Underline"><Glyph><text x="8" y="27" fontSize="30" stroke="#4a4a4a" strokeWidth="0.8">U</text><path d="M9 32h22" stroke="#4a4a4a" strokeWidth="2" /></Glyph></Segment>
            <Segment $w={20} aria-label="Underline style"><Down /></Segment>
            <Segment $w={56} aria-label="Strikethrough">
              <Glyph w={44}><text x="1" y="27" fontSize="20">ABC</text><path d="M1 21h42" stroke="#222" strokeWidth="3" /></Glyph>
            </Segment>
            <Segment $w={56} aria-label="Superscript">
              <Glyph><BigA x={4} y={31} size={31} /><text x="26" y="16" fontSize="18" fontFamily="Noto Sans" fontWeight="700" fill="#4f97dc">2</text></Glyph>
            </Segment>
            <Segment $w={55} aria-label="Subscript">
              <Glyph><BigA x={2} y={31} size={31} /><text x="28" y="33" fontSize="18" fontFamily="Noto Sans" fontWeight="700" fill="#4f97dc">2</text></Glyph>
            </Segment>
          </Segments>
          <Segments>
            <Segment $w={53} aria-label="Font color">
              <Glyph><BigA x={7} y={26} /><path d="M1 29h36v8H1z" fill="#f00" /></Glyph>
            </Segment>
            <Segment $w={20} aria-label="Font color options"><Down /></Segment>
            <Segment $w={56} aria-label="Highlight">
              <Glyph>
                <path d="M0 11h34v16H0z" fill="#a3aee8" />
                <text x="0" y="25" fontSize="18" fill="#28366e">ABC</text>
                <path d="M2 29h36v8H2z" fill="#ff0" />
                <path d="M31 8h8M35 8v21M31 29h8" stroke="#444" strokeWidth="2" />
              </Glyph>
            </Segment>
            <Segment $w={20} aria-label="Highlight options"><Down /></Segment>
          </Segments>
          <Segments>
            <Segment $w={72} $gap={8} aria-label="Text effects">
              <Glyph w={32}>
                <text x="16" y="32" textAnchor="middle" fontFamily="Noto Sans" fontWeight="700" fontSize="34" fill="#fff" stroke="#3fd2da" strokeWidth="7" paintOrder="stroke" strokeLinejoin="round">A</text>
              </Glyph>
              <Down />
            </Segment>
          </Segments>
        </Row>
      </Rows>
    </Group>
  );
}

const IndentIcon = ({ out }: { out?: boolean }) => (
  <svg width="42" height="32" viewBox="0 0 42 32">
    <g stroke="#777" strokeWidth="2.400">
      <path d="M7 4h34M21 10h20M21 16h20M21 22h20M7 28h34" />
    </g>
    <path d={out ? "M1 16l9-8v5h7v6h-7v5z" : "M17 16L8 8v5H1v6h7v5z"} fill="#5cc4ee" stroke="#2185be" strokeWidth="1.600" />
  </svg>
);

function ParagraphGroup() {
  return (
    <Group $w={480}>
      <GroupTitle>Paragraph</GroupTitle>
      <Rows $pad={10}>
        <Row>
          <Segments>
            <Segment $w={61} aria-label="Bullets">
              <svg width="36" height="28" viewBox="0 0 36 28">
                <Lines rows={[[11, 35], [11, 31], [11, 35]]} y={4} step={10} />
                <path d="M0 2h5v5H0zM0 12h5v5H0zM0 22h5v5H0z" fill="#3f8fe0" />
              </svg>
            </Segment>
            <Segment $w={20} aria-label="Bullet options"><Down /></Segment>
            <Segment $w={64} aria-label="Numbering">
              <svg width="36" height="32" viewBox="0 0 36 32">
                <Lines rows={[[11, 35], [11, 31], [11, 35]]} y={6} step={10} />
                <g fontSize="13" fontWeight="700" fontFamily="Noto Sans" fill="#3f8fe0">
                  <text x="0" y="10">1</text><text x="0" y="20">2</text><text x="0" y="30">3</text>
                </g>
              </svg>
            </Segment>
            <Segment $w={20} aria-label="Numbering options"><Down /></Segment>
            <Segment $w={75} $gap={6} aria-label="Multilevel list">
              <svg width="38" height="32" viewBox="0 0 38 32">
                <Lines rows={[[10, 38], [18, 38], [26, 38]]} y={5} step={10} />
                <g fontSize="13" fontWeight="700" fontFamily="Noto Sans" fill="#3f8fe0">
                  <text x="0" y="9">1</text><text x="7" y="20">a</text><text x="17" y="31">i</text>
                </g>
              </svg>
              <Down />
            </Segment>
          </Segments>
          <Segments>
            <Segment $w={53} aria-label="Decrease indent"><IndentIcon out /></Segment>
            <Segment $w={55} aria-label="Increase indent"><IndentIcon /></Segment>
          </Segments>
          <Segments>
            <Segment $w={72} $gap={5} aria-label="Columns">
              <svg width="38" height="34" viewBox="0 0 38 34">
                <path d="M1 1h36v32H1z" fill="#fff" stroke="#999" strokeWidth="2" />
                <path d="M5 5h12v24H5zM21 5h12v24H21z" fill="#dcf2d6" stroke="#5fb35a" strokeWidth="2.400" />
                <path d="M8 11h6M8 15h6M8 19h6M8 23h6M24 11h6M24 15h6M24 19h6M24 23h6" stroke="#aaa" />
              </svg>
              <Down />
            </Segment>
          </Segments>
        </Row>
        <Row>
          <Segments>
            {aligns.map((a, i) => (
              <Segment key={a.label} $w={i === 0 ? 53 : i === 3 ? 55 : 56} $on={i === 0} aria-label={a.label}>
                <svg width="40" height="32" viewBox="0 0 40 32">
                  <Lines rows={a.rows} y={4} step={6} c={i === 0 ? "#6a6a6a" : "#777"} />
                </svg>
              </Segment>
            ))}
          </Segments>
          <Segments>
            <Segment $w={72} $gap={6} aria-label="Line spacing">
              <svg width="38" height="34" viewBox="0 0 38 34">
                <path d="M7 0l7 8h-4v7H4V8H0zM7 34l7-8h-4v-7H4v7H0z" fill="#9cc4f0" stroke="#3f74b8" strokeWidth="1.600" />
                <Lines rows={[[17, 38], [17, 38], [17, 38], [17, 38]]} y={5} step={8} />
              </svg>
              <Down />
            </Segment>
          </Segments>
          <Segments>
            <Segment $w={72} $gap={6} aria-label="Borders">
              <svg width="36" height="36" viewBox="0 0 36 36">
                <path d="M1 1h34v34H1zM18 1v34M1 18h34" fill="none" stroke="#888" strokeWidth="2" strokeDasharray="2 2" />
              </svg>
              <Down />
            </Segment>
          </Segments>
          <Segments>
            <Segment $w={52} aria-label="Sort">
              <Glyph>
                <text x="0" y="18" fontSize="25" fontWeight="700" fill="#d08a1e" stroke="#a86a10" strokeWidth="0.6">A</text>
                <text x="0" y="38" fontSize="25" fontWeight="700" fill="#3a6cc0" stroke="#28509a" strokeWidth="0.6">Z</text>
                <path d="M28 10h5v15h6l-9 10-8-10h6z" fill="#f0f0f0" stroke="#777" strokeWidth="1.600" />
              </Glyph>
            </Segment>
          </Segments>
        </Row>
      </Rows>
    </Group>
  );
}

function StylesGroup() {
  return (
    <Group>
      <GroupTitle>Styles</GroupTitle>
      <StylesBody>
        <Gallery>
          {cards.map((c, i) => (
            <Card key={c.name} $on={i === 0}>
              <Preview $size={c.size} $color={c.color} $family={c.family} $bold={c.bold}>AaBbCcDdEe</Preview>
              <CardName>{c.name}</CardName>
            </Card>
          ))}
          <RoundNext aria-label="More styles">
            <svg width="9" height="16" viewBox="0 0 9 16"><path d="M0 0l9 8-9 8z" fill="#333" /></svg>
          </RoundNext>
        </Gallery>
        <StyleTools>
          <PlainButton $gap={3} aria-label="Change styles">
            <svg width="40" height="40" viewBox="0 0 40 40" fontFamily={serif} fontWeight="700">
              <text x="0" y="30" fontSize="32" fill="#b28ad4">A</text>
              <text x="12" y="38" fontSize="36" fill="#5d8fd2">A</text>
              <path d="M20 6l7-6v4q9 2 8 9h4l-6 5-5-5h3q0-4-4-5v4z" fill="#2a98e0" />
            </svg>
            <Down />
          </PlainButton>
          <PlainButton aria-label="Styles pane">
            <svg width="40" height="40" viewBox="0 0 40 40">
              <path d="M1 1h31v36H1z" fill="#f4f4f4" stroke="#a5a5a5" strokeWidth="1.600" />
              <path d="M1 7h31" stroke="#a5a5a5" strokeWidth="1.600" />
              <path d="M5 1h6v6H5z" fill="#dd5a35" />
              <circle cx="24" cy="25" r="14.500" fill="#4f86cf" stroke="#2f63ab" />
              <path d="M30 15v3h-2v16h-3V18h-2v16h-3V25q-5 0-5-5t5-5z" fill="#fff" />
            </svg>
          </PlainButton>
        </StyleTools>
      </StylesBody>
    </Group>
  );
}

function InsertGroups() {
  return (
    <>
      <Group $w={316}>
        <GroupTitle>Insert</GroupTitle>
        <BigRow $pad={6}>
          <BigButton $w={102}>
            <BigIcon>
              <svg width="62" height="52" viewBox="0 0 62 52">
                <path d="M3 5h52v42H3z" fill="#fff" stroke="#666" strokeWidth="2" />
                <text x="7" y="30" fontSize="27" fontWeight="700" fontFamily="Noto Sans" fill="#222">A</text>
                <Lines rows={[[30, 51], [30, 51], [30, 51], [30, 51], [30, 51]]} y={11} step={4} c="#999" />
                <Lines rows={[[8, 51], [8, 51]]} y={34} step={5} c="#999" />
                {[[3, 5], [55, 5], [3, 47], [55, 47]].map(([x, y]) => (
                  <circle key={`${x}-${y}`} cx={x} cy={y} r="2.600" fill="#8fb8ff" stroke="#2f74f0" strokeWidth="2" />
                ))}
              </svg>
              <Down c="#666" />
            </BigIcon>
            Text Box
          </BigButton>
          <BigButton $w={100}>
            <BigIcon>
              <svg width="60" height="58" viewBox="0 0 60 58" fill="#9bbcec" stroke="#4f7fc4" strokeWidth="2">
                <circle cx="24" cy="17" r="15.500" />
                <path d="M2 22l34 35H2z" />
                <path d="M27 20h30v30H27z" />
              </svg>
              <Down c="#666" />
            </BigIcon>
            Shape
          </BigButton>
          <BigButton $w={94}>
            <BigIcon>
              <svg width="60" height="50" viewBox="0 0 60 50">
                <path d="M1 1h45l13 14v34H1z" fill="#fff" stroke="#999" strokeWidth="2" />
                <path d="M6 6h40l8 9v28H6z" fill="#57b5e8" />
                <path d="M6 16q16-4 24 2t24-6v14H6z" fill="#dcf2fb" />
                <path d="M6 30q8-6 16-3 14-2 20-8 6-3 12 0v14H6z" fill="#5e9b32" />
                <path d="M6 33q24-4 48 0v10H6z" fill="#3a8fc8" />
                <path d="M46 1v14h13z" fill="#eee" stroke="#999" />
              </svg>
              <Down c="#666" />
            </BigIcon>
            Picture
          </BigButton>
        </BigRow>
      </Group>
      <Group $w={110}>
        <GroupTitle>Themes</GroupTitle>
        <BigRow $pad={12}>
          <BigButton $w={84}>
            <BigIcon>
              <svg width="60" height="56" viewBox="0 0 60 56">
                <path d="M1 1h43l15 15v37H1z" fill="#fff" stroke="#777" strokeWidth="2" />
                <path d="M44 1v15h15z" fill="#f2f2f2" stroke="#777" strokeWidth="2" />
                <text x="7" y="30" fontSize="32" fontWeight="700" fontFamily={serif} fill="#3f7fc8">Aa</text>
                <path d="M42 27h12M7 34h47" stroke="#bbb" strokeWidth="2" />
                {["#4b8acb", "#cf4646", "#86bb4a", "#9a5bb8", "#e28a3c"].map((c, i) => (
                  <path key={c} d={`M${8 + i * 10} 42h6v6h-6z`} fill="#fff" stroke={c} strokeWidth="2.600" />
                ))}
              </svg>
              <Down c="#666" />
            </BigIcon>
            Themes
          </BigButton>
        </BigRow>
      </Group>
    </>
  );
}

const HourGlass = () => (
  <svg width="18" height="46" viewBox="0 0 18 46">
    <path d="M1 1h16v7l-8 10-8-10z" fill="#8cc0f4" stroke="#2a5cb4" strokeWidth="2" />
    <path d="M1 1h16v5H1z" fill="#2f6fd0" />
    <path d="M9 18l8 9v5H1v-5z" fill="#a8d6fa" stroke="#2a5cb4" strokeWidth="2" />
    <path d="M1 36h16v7H1z" fill="#a0d0fa" stroke="#2a5cb4" strokeWidth="2" />
    <path d="M1 33h16M2 45h14" stroke="#555" strokeWidth="2" />
  </svg>
);

function Horizontal() {
  return (
    <RulerArea>
      <HRuler>
        <HPart $margin="left">
          {range(10, -10).map((k) => (
            <HTick key={k} $h={tickSize(k)}>{k === -8 && <HLabel>1</HLabel>}</HTick>
          ))}
        </HPart>
        <HPart>
          <Marker $side="left"><HourGlass /></Marker>
          {range(47).map((k) => (
            <HTick key={k} $h={tickSize(k)}>{k % 8 === 0 && <HLabel>{k / 8}</HLabel>}</HTick>
          ))}
          <Marker $side="right">
            <svg width="18" height="32" viewBox="0 0 18 32">
              <path d="M9 14l8 10v5H1v-5z" fill="#9ccff8" stroke="#2a6cc4" strokeWidth="2" />
              <path d="M2 31h14" stroke="#666" strokeWidth="2" />
            </svg>
          </Marker>
        </HPart>
        <HPart $margin="right">
          {range(9).map((k) => (
            <HTick key={k} $h={tickSize(k)}>{k === 8 && <HLabel>7</HLabel>}</HTick>
          ))}
        </HPart>
      </HRuler>
      <TabTicks>
        {range(11).map((k) => <TabTick key={k} />)}
      </TabTicks>
    </RulerArea>
  );
}

function Vertical() {
  return (
    <VRuler>
      <VPart $margin>
        {range(8, -8).map((k) => (
          <VTick key={k} $w={tickSize(k)}>{k === -8 && <VLabel>1</VLabel>}</VTick>
        ))}
      </VPart>
      <VPart>
        {range(71).map((k) => (
          <VTick key={k} $w={tickSize(k)}>{k % 8 === 0 && <VLabel>{k / 8}</VLabel>}</VTick>
        ))}
      </VPart>
    </VRuler>
  );
}

const viewIcons: [string, number, React.ReactNode][] = [
  ["Draft view", 56, <path key="a" d="M7 7h28M7 16h26M7 25h28" stroke="#8c8c8c" strokeWidth="4" />],
  ["Outline view", 56, <path key="a" d="M3 7h6M12 7h16M8 16h5M16 16h16M12 25h5M20 25h16" stroke="#8c8c8c" strokeWidth="4" />],
  ["Publishing view", 56, (
    <g key="a">
      <rect x="3" y="4" width="34" height="26" rx="3" fill="#8f8f8f" />
      <path d="M14 8H8v18h6M27 8h6v18h-6" fill="none" stroke="#d8d8d8" strokeWidth="2" />
      <path d="M15 6l12 12-5 1 3 7-4 2-3-7-3 3z" fill="#f4f4f4" />
    </g>
  )],
  ["Print layout view", 56, (
    <g key="a">
      <rect x="3" y="4" width="34" height="25" rx="3" fill="#b0d6f0" stroke="#d4eafa" strokeWidth="2" />
      <path d="M9 10h22M9 16h20M9 22h22" stroke="#7690a8" strokeWidth="2.400" />
    </g>
  )],
  ["Notebook view", 56, (
    <g key="a">
      <rect x="5" y="4" width="30" height="26" rx="4" fill="#8f8f8f" />
      <path d="M13 5v24M7 11h26M7 17h26M7 23h26" stroke="#d8d8d8" strokeWidth="1.600" />
    </g>
  )],
  ["Full screen view", 57, (
    <g key="a">
      <rect x="4" y="4" width="32" height="25" rx="4" fill="#8f8f8f" />
      <path d="M9 14V9h6M25 9h6v5M9 19v5h6M25 24h6v-5" fill="none" stroke="#eee" strokeWidth="2.400" />
    </g>
  )],
];

function Bottom() {
  return (
    <Footer>
      <Views>
        <ViewSegments>
          {viewIcons.map(([label, w, art], i) => (
            <Segment key={label} $w={w} $on={i === 3} aria-label={label}>
              <svg width="40" height="32" viewBox="0 0 40 32">{art}</svg>
            </Segment>
          ))}
        </ViewSegments>
      </Views>
      <Bars>
        <HScroll />
        <StatusBar>
          <svg width="22" height="22" viewBox="0 0 22 22">
            <path d="M1 21L21 1M9 21L21 9M17 21l4-4" stroke="#8a8d92" strokeWidth="2" />
          </svg>
        </StatusBar>
      </Bars>
    </Footer>
  );
}

function BehindRight() {
  return (
    <Behind>
      <Slab $h={39} $bg="#2f5190" />
      <Slab $h={22} $bg="#efefef" />
      <Slab $h={50} $bg="linear-gradient(#e6e6e6, #d9d9d9 48px, #999 48px)" />
      <Slab $h={10} $bg="linear-gradient(#e4e4e4 8px, #aaa 8px)" />
      <Slab $h={51} $bg="linear-gradient(#fff 49px, #aaa 49px)" />
      <Slab $h={56} $bg="linear-gradient(90deg, #b0b0b0, #dedede)" />
      <Slab $h={31} $bg="#111" />
      <Slab $h={30} $bg="#2b2b2b" />
      <Slab $h={3} $bg="#3a3a3a" />
      <Slab $h={60} $bg="linear-gradient(#262626, #0c0c0c)">
        <SlabText $size={28} $line={66} $color="#eee" $bold>ov</SlabText>
      </Slab>
      <Slab $h={24} $bg="#2d2d2d" />
      <Slab $h={70} $bg="linear-gradient(#a39f8f, #8f8a78)">
        <svg width="14" height="70" viewBox="0 0 14 70">
          <path d="M0 34q4-12 14-14v14L6 58H0z" fill="#1d94cf" />
          <path d="M3 28l11 18v10L2 38z" fill="#0d6ea6" />
        </svg>
      </Slab>
      <Slab $h={34} $bg="linear-gradient(#7fa8d0 2px, #f1f1f1 2px 32px, #7fa8d0 32px)">
        <SlabText $size={13} $line={18} $color="#222" $bold>ro</SlabText>
        <SlabText $size={13} $line={14} $color="#222" $bold>&nbsp;N</SlabText>
      </Slab>
      <Slab $h={55} $bg="linear-gradient(90deg, #bdb796, #d6d0b0)" />
      <Slab $h={16} $bg="linear-gradient(#4a4a4a 5px, #222 5px 10px, #4a4a4a 10px)" />
      <Slab $h={22} $bg="linear-gradient(#bbb, #ddd)" />
      <Slab $h={4} $bg="#1d55d8" />
      <Slab $h={132} $bg="repeating-linear-gradient(#fafafa 0 8px, #e6eaf0 8px 13px)" />
      <Slab $h={8} $bg="#4a4a4a" />
      <Slab $h={34} $bg="#2b2b2b" />
      <Slab $h={20} $bg="#0f0f0e" />
      <Slab $h={30} $bg="#2b2b2b" />
      <Slab $h={75} $bg="#161614" />
      <Slab $h={10} $bg="#2b2b2b" />
      <Slab $h={112} $bg="#161614" />
      <Slab $h={10} $bg="#2b2b2b" />
      <Slab $h={80} $bg="#161614">
        <SlabText $size={26} $line={76} $color="#4a6fd0">t</SlabText>
      </Slab>
      <Slab $h={10} $bg="#2b2b2b" />
      <Slab $h={20} $bg="#161614" />
      <Slab $h={56} $bg="radial-gradient(circle at 13px 50%, #ddd 2px, #2a2b2d 4px)" />
      <Slab $h={20} $bg="#161614" />
      <Slab $h={30} $bg="#2b2b2b" />
    </Behind>
  );
}

const belowChunks: [number, string][] = [
  [160, "linear-gradient(90deg, #000, #04101c)"],
  [358, "#0e0e0c"],
  [50, "#262626"],
  [268, "#0f0f0d"],
  [399, "linear-gradient(#6c6f76, #a9b0bb)"],
  [62, "linear-gradient(#a8a8a8, #e2e2e2)"],
  [223, "linear-gradient(115deg, #646b6b, #c6cac6)"],
  [267, "#10100f"],
  [51, "#222"],
  [570, "#0e0e0d"],
];

export default function App() {
  return (
    <>
      <Global />
      <Desktop>
        <Menus />
        <Window>
          <Top />
          <TabStrip />
          <RibbonFrame>
            <Ribbon>
              <FontGroup />
              <ParagraphGroup />
              <StylesGroup />
              <InsertGroups />
              <RibbonTail />
            </Ribbon>
          </RibbonFrame>
          <Body>
            <TabStop aria-label="Tab stop type">
              <span>
                <svg width="26" height="26" viewBox="0 0 26 26">
                  <path d="M3 20V9h8" fill="none" stroke="#111" strokeWidth="2.600" />
                  <path d="M9 3l7 6-7 6z" fill="#111" />
                  <path d="M16 17h10l-5 7z" fill="#444" />
                </svg>
              </span>
            </TabStop>
            <Horizontal />
            <Vertical />
            <Canvas>
              <Page aria-label="Document body" />
            </Canvas>
            <Scroll>
              <SplitHandle aria-label="Split window" />
              <Thumb />
              <Browse>
                <button aria-label="Previous page">
                  <svg width="14" height="18" viewBox="0 0 14 18"><path d="M7 0l7 8H0zM7 9l7 8H0z" fill="#8f8f8f" /></svg>
                </button>
                <button aria-label="Select browse object">
                  <svg width="16" height="16" viewBox="0 0 16 16"><circle cx="8" cy="8" r="6.500" fill="#e0e0e0" stroke="#888" strokeWidth="2" /></svg>
                </button>
                <button aria-label="Next page">
                  <svg width="14" height="18" viewBox="0 0 14 18"><path d="M0 1h14L7 9zM0 10h14l-7 8z" fill="#8f8f8f" /></svg>
                </button>
              </Browse>
            </Scroll>
          </Body>
          <Bottom />
        </Window>
        <BehindRight />
        <Below>
          {belowChunks.map(([g, bg], i) => <Chunk key={i} $grow={g} $bg={bg} />)}
        </Below>
      </Desktop>
    </>
  );
}
